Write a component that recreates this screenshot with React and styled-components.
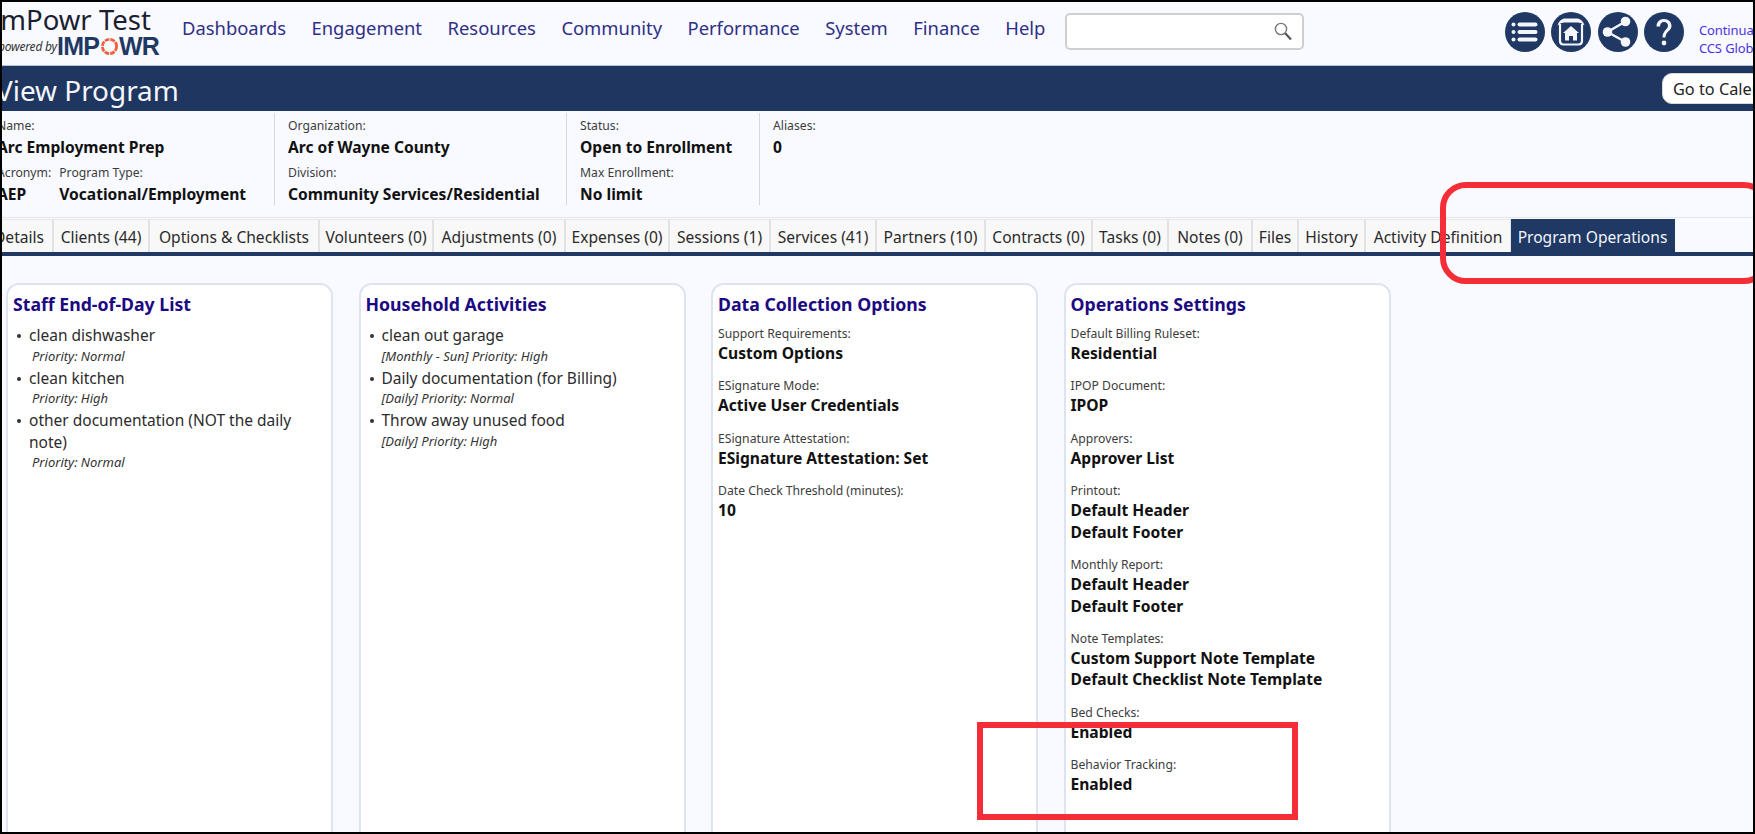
import React from "react";
import styled, { createGlobalStyle } from "styled-components";

const Global = createGlobalStyle`
  html, body { margin: 0; padding: 0; background: #000; height: 100%; overflow: hidden; }
  body { font-family: "Noto Sans", "Open Sans", sans-serif; }
`;
const Frame = styled.div`
  position: relative;
  width: 1751px;
  height: 830px;
  margin: 2px;
  background: #f8faff;
  overflow: hidden;
`;
const Header = styled.header`
  display: flex;
  align-items: flex-start;
  height: 63px;
  border-bottom: 1px solid #b9c2d2;
  box-sizing: content-box;
`;
const Logo = styled.div`
  width: 178px;
  flex: none;
  margin-left: -11px;
  padding-top: 3px;
`;
const LogoName = styled.div`
  font-size: 27.5px;
  line-height: 30px;
  color: #1b2030;
  white-space: nowrap;
`;
const LogoSub = styled.div`
  display: flex;
  align-items: center;
  height: 24px;
  margin-top: -1px;
  white-space: nowrap;
`;
const Powered = styled.span`
  flex: none;
  width: 66px;
  font-size: 12px;
  font-style: italic;
  letter-spacing: -0.2px;
  color: #333;
  text-align: right;
`;
const Brand = styled.span`
  display: inline-flex;
  align-items: center;
  font-family: "Liberation Sans", sans-serif;
  font-weight: 700;
  font-size: 25px;
  letter-spacing: -0.8px;
  color: #1f3864;
`;
const Nav = styled.nav`
  display: flex;
  gap: 25.5px;
  margin-left: 13px;
  padding-top: 14px;
  width: 883px;
  flex: none;
`;
const NavLink = styled.a`
  font-size: 18.4px;
  line-height: 24px;
  color: #2f2f86;
  white-space: nowrap;
`;
const Search = styled.div`
  flex: none;
  display: flex;
  align-items: center;
  justify-content: flex-end;
  width: 239px;
  height: 37px;
  margin-top: 11px;
  padding-right: 8px;
  box-sizing: border-box;
  background: #fff;
  border: 2px solid #cfcfcf;
  border-radius: 5px;
`;
const IconRow = styled.div`
  display: flex;
  gap: 6.3px;
  margin-left: 201px;
  margin-top: 10px;
  flex: none;
`;
const RoundIcon = styled.svg`
  width: 40px;
  height: 40px;
  display: block;
`;
const UserLinks = styled.div`
  margin-left: 15px;
  padding-top: 19px;
  font-size: 13px;
  line-height: 18px;
  color: #4a32e0;
  white-space: nowrap;
  letter-spacing: -0.1px;
`;
const TitleBar = styled.div`
  display: flex;
  align-items: center;
  justify-content: space-between;
  height: 45px;
  background: #1f3660;
  overflow: hidden;
`;
const PageTitle = styled.h1`
  margin: 2px 0 0 -6px;
  font-size: 27.9px;
  font-weight: 400;
  color: #f4f6fb;
  white-space: nowrap;
`;
const CalendarButton = styled.button`
  flex: none;
  width: 130px;
  height: 31px;
  margin-right: -39px;
  padding: 0 0 0 10px;
  text-align: left;
  background: #fff;
  border: 1px solid #d8d8d8;
  border-radius: 10px;
  font: 400 16.3px "Noto Sans", sans-serif;
  color: #222;
  white-space: nowrap;
`;
const Info = styled.section`
  display: flex;
  height: 107px;
  padding-top: 2px;
  margin-left: -9px;
  box-sizing: border-box;
  border-bottom: 1px solid #e4e6ec;
`;
const InfoCol = styled.div`
  width: ${(p) => p.$w}px;
  flex: none;
  height: 92px;
  padding: 3px 0 0 ${(p) => p.$pad || 13}px;
  box-sizing: border-box;
  border-right: ${(p) => (p.$last ? "none" : "1px solid #d5d8de")};
`;
const InfoRow = styled.div`
  display: flex;
  gap: 8px;
`;
const InfoLabel = styled.div`
  font-size: 12.2px;
  line-height: 19px;
  color: #3c3c3c;
  white-space: nowrap;
`;
const InfoValue = styled.div`
  font-size: 15.6px;
  line-height: 24px;
  font-weight: 700;
  color: #111;
  white-space: nowrap;
  margin-bottom: 4px;
`;
const TabBar = styled.div`
  display: flex;
  height: 37px;
  margin-left: -17px;
  margin-top: 1px;
  width: 1800px;
  border-bottom: 4px solid #1f3864;
  box-sizing: border-box;
`;
const Tab = styled.div`
  flex: none;
  width: ${(p) => p.$w}px;
  height: 33px;
  padding-top: 1px;
  box-sizing: border-box;
  display: flex;
  align-items: center;
  justify-content: center;
  font-size: 15.6px;
  white-space: nowrap;
  background: ${(p) => (p.$active ? "#1f3864" : "#f8f8f8")};
  color: ${(p) => (p.$active ? "#f2f5fa" : "#2a2a2a")};
  border-left: ${(p) => (p.$active ? "none" : "1px solid #e2e2e2")};
  border-top: 1px solid ${(p) => (p.$active ? "#1f3864" : "#e8e8e8")};
  border-right: 1px solid ${(p) => (p.$active ? "#1f3864" : "#e2e2e2")};
`;
const Cards = styled.main`
  display: flex;
  gap: 25.5px;
  padding: 27px 0 0 4px;
  height: 600px;
`;
const Card = styled.article`
  flex: none;
  width: 327px;
  height: 600px;
  box-sizing: border-box;
  padding: 6px 5px 0;
  background: #fff;
  border: 2px solid #dde3ef;
  border-radius: 13px;
`;
const CardTitle = styled.h2`
  margin: 0 0 7px;
  font-size: 17.7px;
  line-height: 26px;
  font-weight: 700;
  color: #1c0a82;
  white-space: nowrap;
`;
const List = styled.ul`
  margin: 8px 0 0;
  padding: 0 0 0 16px;
  list-style: none;
`;
const Item = styled.li`
  position: relative;
  font-size: 15.5px;
  line-height: 21.5px;
  color: #2c2c2c;
  margin-bottom: 2px;
  &::before {
    content: "";
    position: absolute;
    left: -12px;
    top: 9px;
    width: 4px;
    height: 4px;
    border-radius: 50%;
    background: #333;
  }
`;
const ItemNote = styled.div`
  font-size: 13px;
  line-height: 19px;
  font-style: italic;
  color: #333;
  padding-left: ${(p) => (p.$indent ? 3 : 0)}px;
`;
const Field = styled.div`
  margin-bottom: 12.2px;
`;
const FieldLabel = styled.div`
  font-size: 12.2px;
  line-height: 19px;
  color: #3c3c3c;
  white-space: nowrap;
`;
const FieldValue = styled.div`
  font-size: 15.6px;
  line-height: 21.3px;
  font-weight: 700;
  color: #111;
  white-space: nowrap;
`;
const RedRing = styled.div`
  position: absolute;
  left: 1438px;
  top: 180px;
  width: 330px;
  height: 102px;
  box-sizing: border-box;
  border: 6px solid #f52d36;
  border-radius: 26px;
`;
const RedBox = styled.div`
  position: absolute;
  left: 975px;
  top: 720px;
  width: 321px;
  height: 98px;
  box-sizing: border-box;
  border: 6px solid #f52d36;
`;

const navItems = ["Dashboards", "Engagement", "Resources", "Community", "Performance", "System", "Finance", "Help"];
const tabs = [
  ["Details", 68], ["Clients (44)", 96], ["Options & Checklists", 170], ["Volunteers (0)", 114],
  ["Adjustments (0)", 132], ["Expenses (0)", 104], ["Sessions (1)", 101], ["Services (41)", 106],
  ["Partners (10)", 109], ["Contracts (0)", 107], ["Tasks (0)", 76], ["Notes (0)", 84],
  ["Files", 46], ["History", 67], ["Activity Definition", 146], ["Program Operations", 164],
];
const staff = [
  ["clean dishwasher", "Priority: Normal"],
  ["clean kitchen", "Priority: High"],
  ["other documentation (NOT the daily note)", "Priority: Normal"],
];
const household = [
  ["clean out garage", "[Monthly - Sun] Priority: High"],
  ["Daily documentation (for Billing)", "[Daily] Priority: Normal"],
  ["Throw away unused food", "[Daily] Priority: High"],
];
const dataFields = [
  ["Support Requirements:", ["Custom Options"]],
  ["ESignature Mode:", ["Active User Credentials"]],
  ["ESignature Attestation:", ["ESignature Attestation: Set"]],
  ["Date Check Threshold (minutes):", ["10"]],
];
const opsFields = [
  ["Default Billing Ruleset:", ["Residential"]],
  ["IPOP Document:", ["IPOP"]],
  ["Approvers:", ["Approver List"]],
  ["Printout:", ["Default Header", "Default Footer"]],
  ["Monthly Report:", ["Default Header", "Default Footer"]],
  ["Note Templates:", ["Custom Support Note Template", "Default Checklist Note Template"]],
  ["Bed Checks:", ["Enabled"]],
  ["Behavior Tracking:", ["Enabled"]],
];

const Fields = ({ items }) =>
  items.map(([label, values]) => (
    <Field key={label}>
      <FieldLabel>{label}</FieldLabel>
      {values.map((v) => (
        <FieldValue key={v}>{v}</FieldValue>
      ))}
    </Field>
  ));

const Tasks = ({ items, indent }) => (
  <List>
    {items.map(([name, note]) => (
      <Item key={name}>
        {name}
        <ItemNote $indent={indent}>{note}</ItemNote>
      </Item>
    ))}
  </List>
);

const NAVY = "#1f3864";

export default function App() {
  return (
    <>
      <Global />
      <Frame>
        <Header>
          <Logo>
            <LogoName>ImPowr Test</LogoName>
            <LogoSub>
              <Powered>powered by</Powered>
              <Brand>
                IMP
                <svg width="19" height="19" viewBox="0 0 20 20" style={{ margin: "0 0.5px" }}>
                  <circle cx="10" cy="10" r="7.5" fill="none" stroke="#f0623f" strokeWidth="3" strokeDasharray="5 1" />
                </svg>
                WR
              </Brand>
            </LogoSub>
          </Logo>
          <Nav>
            {navItems.map((n) => (
              <NavLink key={n}>{n}</NavLink>
            ))}
          </Nav>
          <Search>
            <svg width="21" height="21" viewBox="0 0 21 21" fill="none">
              <circle cx="8" cy="8" r="5.6" stroke="#777" strokeWidth="1.4" />
              <path d="M12.2 12.2 L18 18.6" stroke="#555" strokeWidth="2.2" />
            </svg>
          </Search>
          <IconRow>
            <RoundIcon viewBox="0 0 40 40">
              <circle cx="20" cy="20" r="20" fill={NAVY} />
              <g fill="#f4f6fb">
                <circle cx="8.5" cy="12.5" r="2" />
                <circle cx="8.5" cy="20" r="2" />
                <circle cx="8.5" cy="27.5" r="2" />
                <rect x="12.5" y="10.5" width="20" height="4" rx="2" />
                <rect x="12.5" y="18" width="20" height="4" rx="2" />
                <rect x="12.5" y="25.5" width="20" height="4" rx="2" />
              </g>
            </RoundIcon>
            <RoundIcon viewBox="0 0 40 40">
              <circle cx="20" cy="20" r="20" fill={NAVY} />
              <path d="M9 12 V29 Q9 32.500 12.500 32.500 H27.500 Q31 32.500 31 29 V12" fill="none" stroke="#f4f6fb" strokeWidth="2.200" />
              <path d="M6.500 13.500 Q8 8 13 6.500 H27 Q32 8 33.500 13.500 Q30 10.500 27 10.500 H13 Q10 10.500 6.500 13.500 Z" fill="#f4f6fb" />
              <path d="M20 14 L28 21 H26 V28.500 H22 V24 H18 V28.500 H14 V21 H12 Z" fill="#f4f6fb" />
            </RoundIcon>
            <RoundIcon viewBox="0 0 40 40">
              <circle cx="20" cy="20" r="20" fill={NAVY} />
              <g fill="#f4f6fb">
                <circle cx="27.500" cy="9.500" r="4.800" />
                <circle cx="9.500" cy="20" r="4.800" />
                <circle cx="27.500" cy="30" r="4.800" />
              </g>
              <path d="M27.500 9.500 L9.500 20 L27.500 30" fill="none" stroke="#f4f6fb" strokeWidth="2.400" />
            </RoundIcon>
            <RoundIcon viewBox="0 0 40 40">
              <circle cx="20" cy="20" r="20" fill={NAVY} />
              <path d="M12.500 14.500 C12.500 9.500 16 7 20 7 C24.500 7 27.500 10 27.500 13.800 C27.500 19 21.500 19.500 21.500 25.500 H18.500 C18.500 18.500 24 17.500 24 13.800 C24 11.500 22.300 10 20 10 C17.600 10 16 11.800 16 14.500 Z" fill="#f4f6fb" />
              <circle cx="20" cy="31" r="2.400" fill="#f4f6fb" />
            </RoundIcon>
          </IconRow>
          <UserLinks>
            <div>Continual</div>
            <div>CCS Global</div>
          </UserLinks>
        </Header>
        <TitleBar>
          <PageTitle>View Program</PageTitle>
          <CalendarButton>Go to Calendar</CalendarButton>
        </TitleBar>
        <Info>
          <InfoCol $w={282} $pad={4}>
            <InfoLabel>Name:</InfoLabel>
            <InfoValue>Arc Employment Prep</InfoValue>
            <InfoRow>
              <div>
                <InfoLabel>Acronym:</InfoLabel>
                <InfoValue>AEP</InfoValue>
              </div>
              <div>
                <InfoLabel>Program Type:</InfoLabel>
                <InfoValue>Vocational/Employment</InfoValue>
              </div>
            </InfoRow>
          </InfoCol>
          <InfoCol $w={292}>
            <InfoLabel>Organization:</InfoLabel>
            <InfoValue>Arc of Wayne County</InfoValue>
            <InfoLabel>Division:</InfoLabel>
            <InfoValue>Community Services/Residential</InfoValue>
          </InfoCol>
          <InfoCol $w={193}>
            <InfoLabel>Status:</InfoLabel>
            <InfoValue>Open to Enrollment</InfoValue>
            <InfoLabel>Max Enrollment:</InfoLabel>
            <InfoValue>No limit</InfoValue>
          </InfoCol>
          <InfoCol $w={200} $last>
            <InfoLabel>Aliases:</InfoLabel>
            <InfoValue>0</InfoValue>
          </InfoCol>
        </Info>
        <TabBar>
          {tabs.map(([t, w]) => (
            <Tab key={t} $w={w} $active={t === "Program Operations"}>
              {t}
            </Tab>
          ))}
        </TabBar>
        <Cards>
          <Card>
            <CardTitle>Staff End-of-Day List</CardTitle>
            <Tasks items={staff} indent />
          </Card>
          <Card>
            <CardTitle>Household Activities</CardTitle>
            <Tasks items={household} />
          </Card>
          <Card>
            <CardTitle>Data Collection Options</CardTitle>
            <Fields items={dataFields} />
          </Card>
          <Card>
            <CardTitle>Operations Settings</CardTitle>
            <Fields items={opsFields} />
          </Card>
        </Cards>
        <RedRing />
        <RedBox />
      </Frame>
    </>
  );
}
